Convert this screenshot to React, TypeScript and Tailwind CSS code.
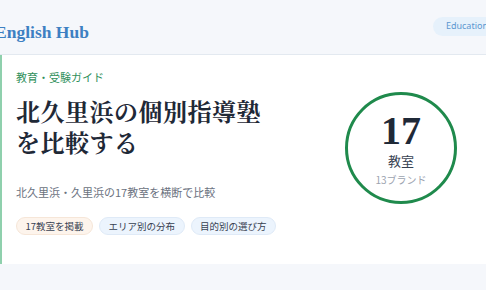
const pills = [
  { label: '17教室を掲載', cls: 'bg-[#fdf4ec] border-[#f6e6d8]' },
  { label: 'エリア別の分布', cls: 'bg-[#ecf4fd] border-[#dfeaf7]' },
  { label: '目的別の選び方', cls: 'bg-[#ecf4fd] border-[#dfeaf7]' },
]

export default function App() {
  return (
    <div className="w-[486px] h-[290px] overflow-hidden bg-[#f5f7fb] font-['Noto_Sans_CJK_JP',sans-serif]">
      {/* Header */}
      <header className="h-[55px] flex items-center justify-between border-b border-[#e3e9f0]">
        <span className="-ml-[5px] mt-[10px] font-['Liberation_Serif',serif] font-bold text-[17.5px] text-[#3d80c2]">
          English Hub
        </span>
        <span className="-mr-[15px] mb-[2px] h-[19px] px-[13px] flex items-center rounded-full bg-[#e6f1fb] text-[9px] text-[#5b97d0] font-['Noto_Sans',sans-serif]">
          Education
        </span>
      </header>

      {/* Hero card */}
      <section className="h-[209px] flex bg-white border-l-2 border-[#8fd0ad]">
        <div className="pl-[14px] pt-[14px]">
          <p className="text-[11px] leading-4 text-[#2f8f5b]">教育・受験ガイド</p>
          <h1 className="mt-[10px] font-['Noto_Serif_CJK_JP','Noto_Sans_CJK_JP',serif] font-bold text-[24px] leading-[31px] text-[#1f2937] tracking-[0.5px]">
            北久里浜の個別指導塾
            <br />
            を比較する
          </h1>
          <p className="mt-[26px] text-[11px] leading-[18px] text-[#6b7280]">
            北久里浜・久里浜の17教室を横断で比較
          </p>
          <div className="mt-4 flex gap-[6px]">
            {pills.map((p) => (
              <span
                key={p.label}
                className={`h-[18px] px-[8.5px] flex items-center rounded-full border text-[9.5px] text-[#374151] ${p.cls}`}
              >
                {p.label}
              </span>
            ))}
          </div>
        </div>

        <div className="ml-auto mr-[29px] mt-[37px]">
          <div className="w-[112px] h-[112px] rounded-full border-[3px] border-[#1f8a4c] flex flex-col items-center justify-center">
            <span className="font-['Liberation_Serif',serif] font-bold text-[40px] leading-[40px] text-[#1f2937]">17</span>
            <span className="mt-[2px] text-[13px] leading-[16px] text-[#374151]">教室</span>
            <span className="mt-[5px] text-[10px] leading-[12px] text-[#9ca3af]">13ブランド</span>
          </div>
        </div>
      </section>
    </div>
  )
}
